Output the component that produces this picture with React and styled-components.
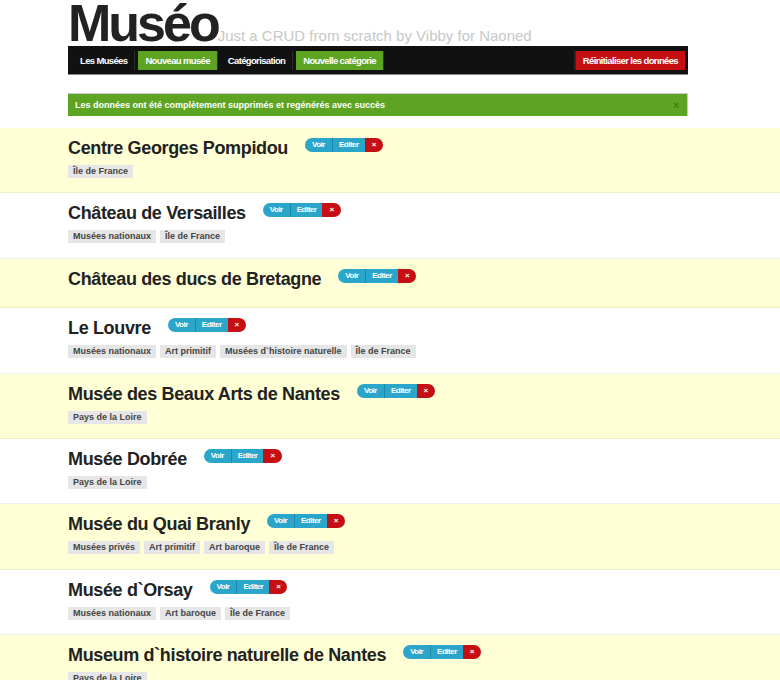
import React from "react";
import styled, { createGlobalStyle } from "styled-components";

const Global = createGlobalStyle`
  html { overflow: hidden; }
  body {
    margin: 0;
    background: #fff;
    font-family: "Liberation Sans", Arial, Helvetica, sans-serif;
    color: #222;
  }
`;

const Page = styled.div`
  width: 780px;
`;

const Container = styled.div`
  width: 620px;
  padding-left: 68px;
`;

const Masthead = styled.header`
  display: flex;
  align-items: baseline;
  height: 46px;
`;

const Logo = styled.h1`
  margin: 0;
  font-size: 52px;
  line-height: 46px;
  font-weight: bold;
  letter-spacing: -3px;
  color: #222;
`;

const Tagline = styled.span`
  font-size: 15px;
  color: #c8c8c8;
`;

const TopBar = styled.nav`
  display: flex;
  align-items: center;
  height: 28px;
  padding: 0 3px 0 5px;
  background: #111;
  box-shadow: 0 1px 0 #8a8a8a;
`;

const NavItem = styled.a`
  display: block;
  height: 19px;
  line-height: 19px;
  padding: 0 7px;
  margin-right: 4px;
  font-size: 9.5px;
  font-weight: bold;
  letter-spacing: -0.65px;
  color: #fff;
  white-space: nowrap;
  background: ${(p) =>
    p.$tone === "green" ? "#5da423" : p.$tone === "red" ? "#c60f13" : "transparent"};
  box-shadow: 1px 0 0 #2e2e2e;
  ${(p) => (p.$push ? "margin-left: auto; margin-right: 0; box-shadow: -2px 0 0 #2a2a2a;" : "")}
`;

const Alert = styled.div`
  display: flex;
  justify-content: space-between;
  align-items: center;
  margin-top: 19px;
  height: 22px;
  padding: 0 8px 0 7px;
  background: #5da423;
  border-top: 1px solid #c9c9c9;
  border-right: 1px solid #c9c9c9;
  color: #fff;
  font-size: 9px;
  font-weight: bold;
`;

const Close = styled.span`
  color: #3f7a14;
  font-size: 10px;
  font-weight: bold;
`;

const List = styled.ul`
  list-style: none;
  margin: 12px 0 0;
  padding: 0;
`;

const Row = styled.li`
  background: ${(p) => (p.$odd ? "#ffffd5" : "#fff")};
  border-bottom: 1px solid rgba(0, 0, 0, 0.06);
  padding: 9px 0 14.4px 68px;
`;

const TitleLine = styled.div`
  display: flex;
  align-items: flex-start;
  gap: 17px;
  margin-bottom: 3px;
`;

const Title = styled.h2`
  margin: 0;
  font-size: 18px;
  line-height: 22px;
  font-weight: bold;
  letter-spacing: -0.35px;
  color: #222;
  white-space: nowrap;
`;

const Group = styled.div`
  display: flex;
  margin-top: 1px;
  height: 14px;
  border-radius: 7px;
  overflow: hidden;
`;

const Btn = styled.a`
  display: block;
  height: 14px;
  line-height: 14px;
  padding: 0 ${(p) => p.$pad || 7}px;
  font-size: 8px;
  font-weight: bold;
  letter-spacing: -0.5px;
  color: #fff;
  background: ${(p) => (p.$danger ? "#c60f13" : "#2ba6cb")};
  border-left: ${(p) => (p.$divider ? "1px solid #1e86a8" : "none")};
  text-align: center;
`;

const Tags = styled.div`
  display: flex;
  gap: 4px;
  margin-top: 6px;
`;

const Tag = styled.span`
  display: block;
  height: 13px;
  line-height: 13px;
  padding: 0 5px;
  background: #e6e6e6;
  color: #444;
  font-size: 9px;
  font-weight: bold;
  white-space: nowrap;
`;

const museums = [
  { name: "Centre Georges Pompidou", tags: ["Île de France"] },
  { name: "Château de Versailles", tags: ["Musées nationaux", "Île de France"] },
  { name: "Château des ducs de Bretagne", tags: [] },
  {
    name: "Le Louvre",
    tags: ["Musées nationaux", "Art primitif", "Musées d`histoire naturelle", "Île de France"],
  },
  { name: "Musée des Beaux Arts de Nantes", tags: ["Pays de la Loire"] },
  { name: "Musée Dobrée", tags: ["Pays de la Loire"] },
  {
    name: "Musée du Quai Branly",
    tags: ["Musées privés", "Art primitif", "Art baroque", "Île de France"],
  },
  { name: "Musée d`Orsay", tags: ["Musées nationaux", "Art baroque", "Île de France"] },
  { name: "Museum d`histoire naturelle de Nantes", tags: ["Pays de la Loire"] },
];

export default function App() {
  return (
    <Page>
      <Global />
      <Container>
        <Masthead>
          <Logo>Muséo</Logo>
          <Tagline>Just a CRUD from scratch by Vibby for Naoned</Tagline>
        </Masthead>
        <TopBar>
          <NavItem>Les Musées</NavItem>
          <NavItem $tone="green">Nouveau musée</NavItem>
          <NavItem>Catégorisation</NavItem>
          <NavItem $tone="green">Nouvelle catégorie</NavItem>
          <NavItem $tone="red" $push>
            Réinitialiser les données
          </NavItem>
        </TopBar>
        <Alert>
          <span>Les données ont été complètement supprimés et regénérés avec succès</span>
          <Close>×</Close>
        </Alert>
      </Container>
      <List>
        {museums.map((m, i) => (
          <Row key={m.name} $odd={i % 2 === 0}>
            <TitleLine>
              <Title>{m.name}</Title>
              <Group>
                <Btn $pad={7}>Voir</Btn>
                <Btn $pad={6} $divider>
                  Editer
                </Btn>
                <Btn $pad={7} $danger>
                  ×
                </Btn>
              </Group>
            </TitleLine>
            {m.tags.length > 0 && (
              <Tags>
                {m.tags.map((t) => (
                  <Tag key={t}>{t}</Tag>
                ))}
              </Tags>
            )}
          </Row>
        ))}
      </List>
    </Page>
  );
}
